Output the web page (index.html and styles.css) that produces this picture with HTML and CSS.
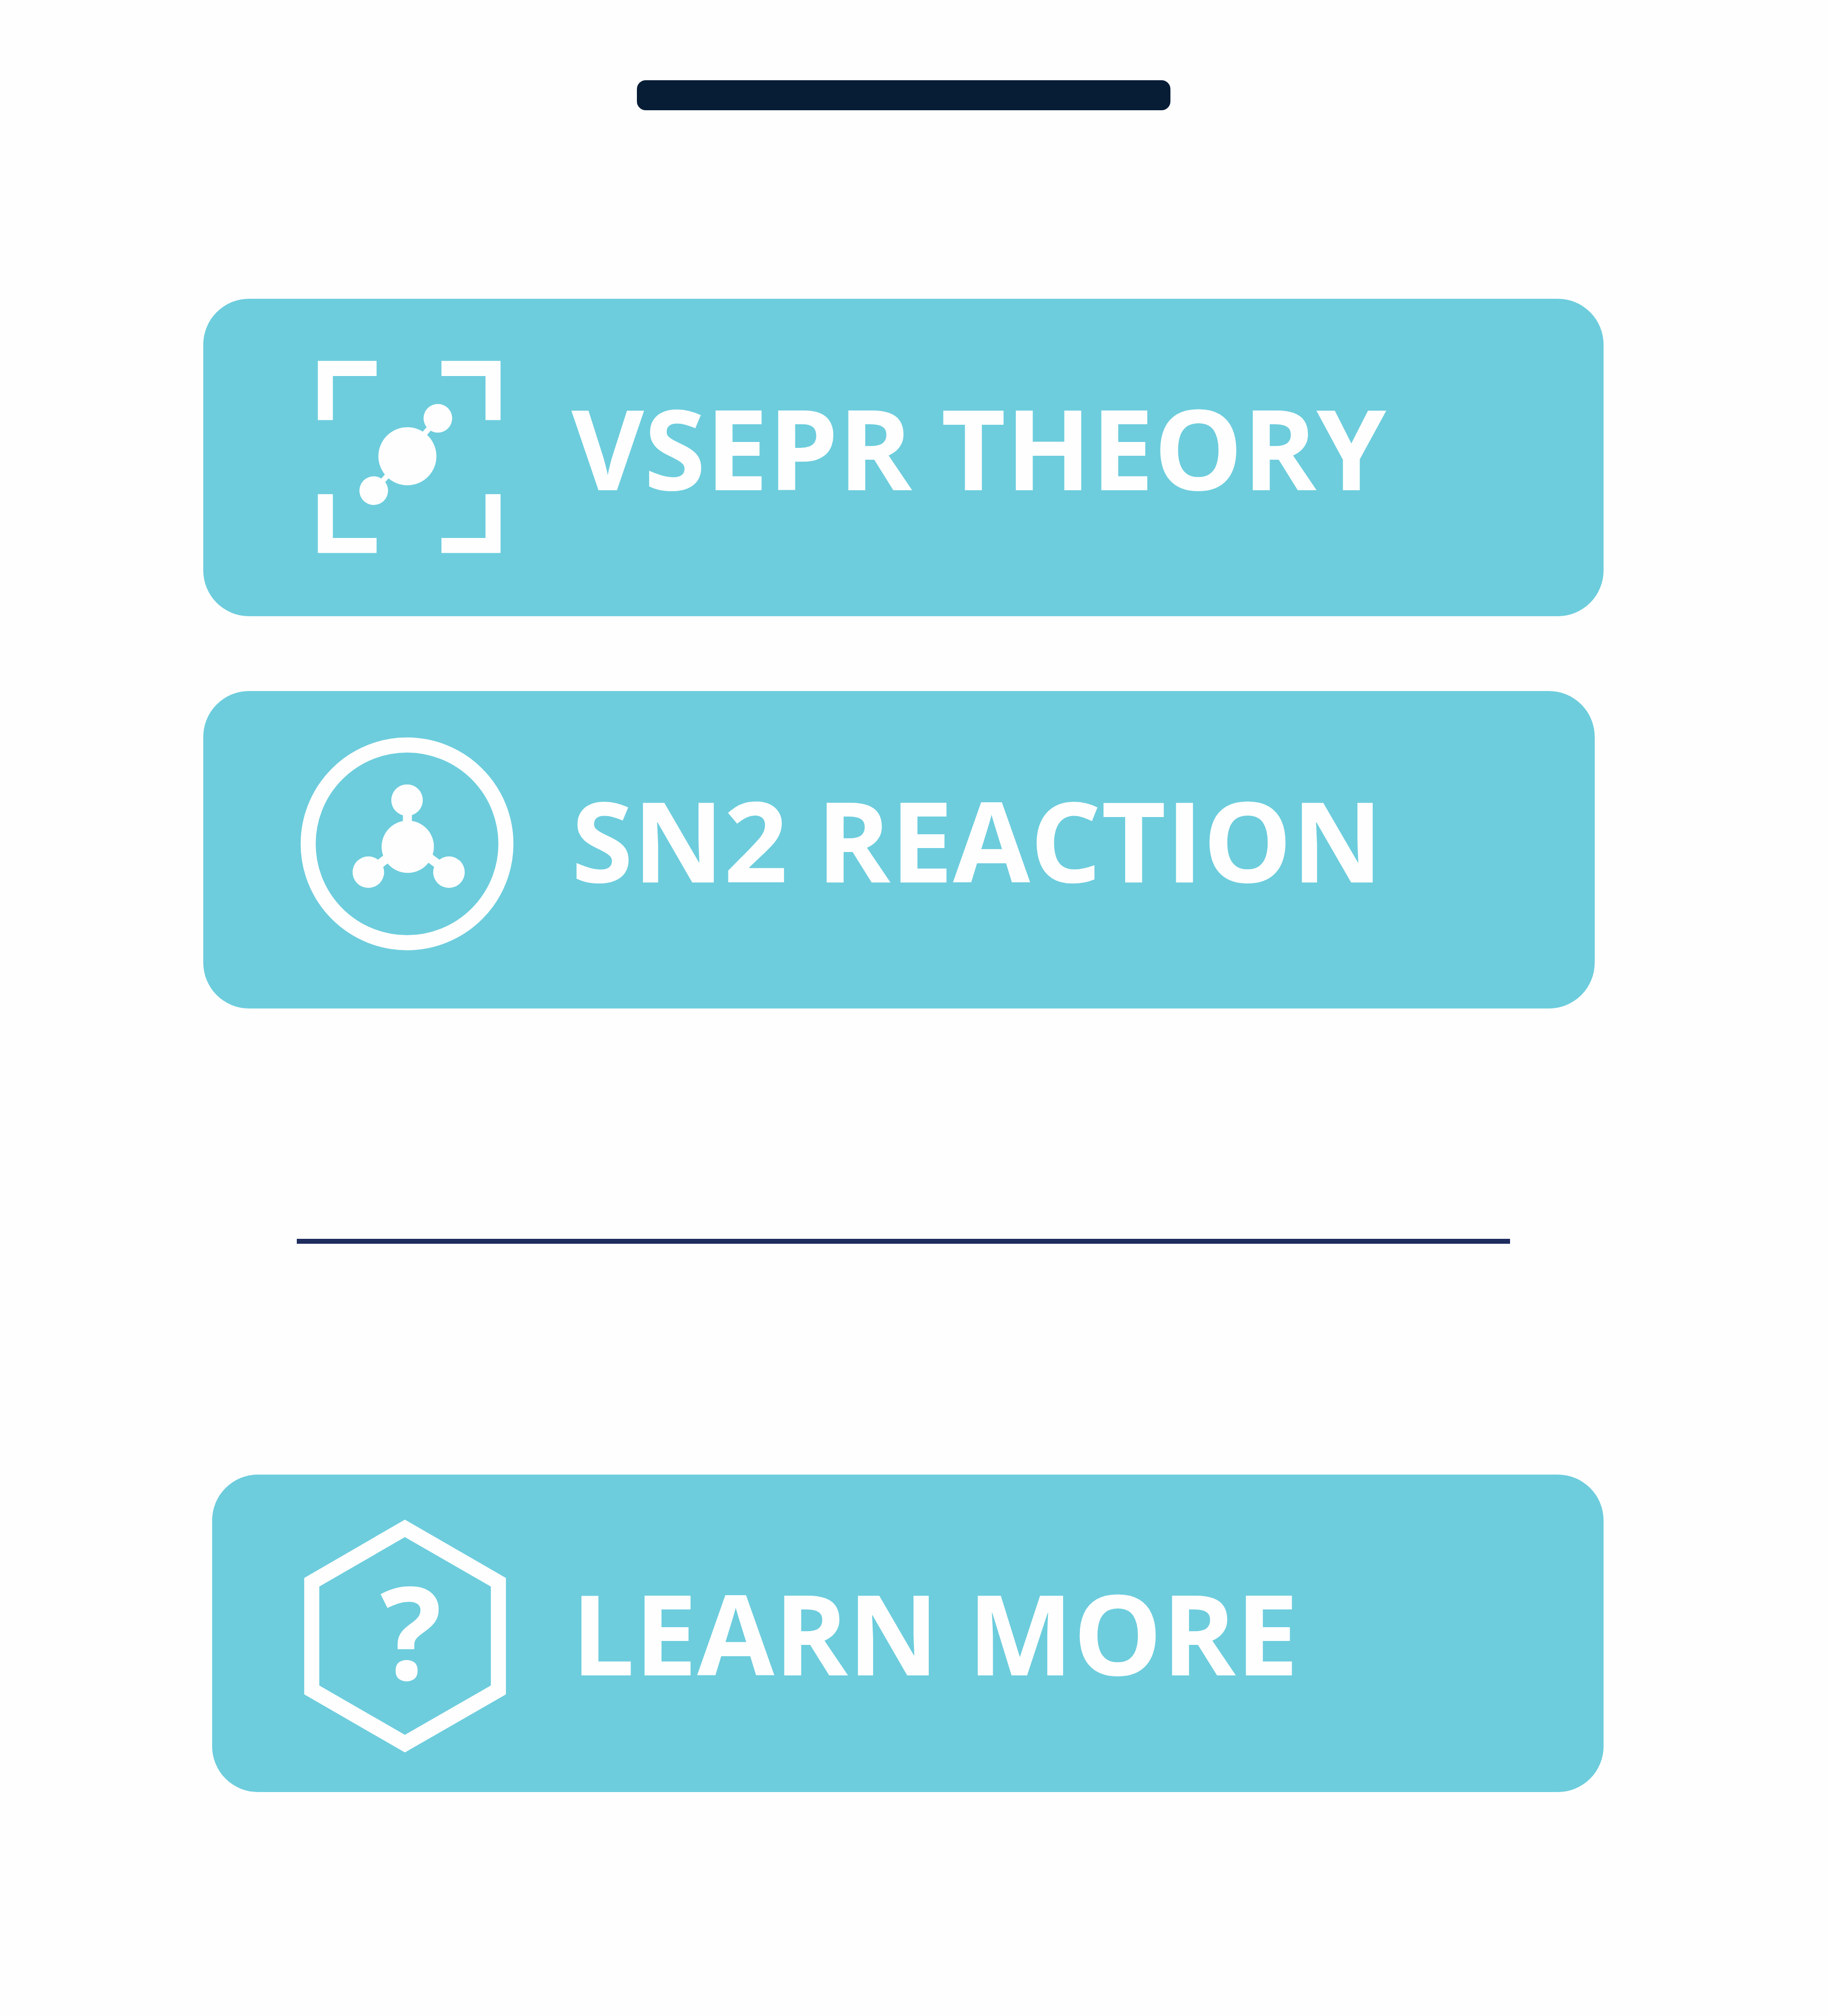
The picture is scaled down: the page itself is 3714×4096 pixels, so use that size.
FILE: index.html
```html
<!DOCTYPE html>
<html lang="en">
<head>
  <meta charset="utf-8">
  <meta name="viewport" content="width=device-width, initial-scale=1">
  <title>Chemistry menu</title>
  <link rel="stylesheet" href="styles.css">
</head>
<body>
  <main class="sheet">
    <div class="handle"></div>

    <nav class="menu">
      <a class="card" href="#vsepr">
        <svg class="card-icon" viewBox="830 833 610 885" aria-hidden="true">
          <g class="stroke">
            <path d="M907 1171V1027H1050M1231 1027H1375V1171M1375 1378V1521H1231M1050 1521H907V1378"/>
            <path class="thin" d="M1060 1349L1205 1185"/>
          </g>
          <circle cx="1136" cy="1272" r="81"/>
          <circle cx="1221" cy="1166" r="40"/>
          <circle cx="1042" cy="1368" r="40"/>
        </svg>
        <span class="card-label">VSEPR THEORY</span>
      </a>

      <a class="card card-short" href="#sn2">
        <svg class="card-icon" viewBox="830 1927 610 885" aria-hidden="true">
          <g class="stroke">
            <circle cx="1135" cy="2353" r="276"/>
            <path class="bond" d="M1136 2240V2340M1045 2420L1110 2369M1235 2420L1165 2368"/>
          </g>
          <circle cx="1137" cy="2361" r="73"/>
          <circle cx="1135" cy="2231" r="44"/>
          <circle cx="1027" cy="2432" r="44"/>
          <circle cx="1252" cy="2432" r="44"/>
        </svg>
        <span class="card-label">SN2 REACTION</span>
      </a>
    </nav>

    <hr class="divider">

    <a class="card card-help" href="#learn-more">
      <svg class="card-icon" viewBox="830 4112 610 885" aria-hidden="true">
        <path fill-rule="evenodd" d="M1129 4237L1411 4400V4725L1129 4887L848 4725V4400ZM1129 4286L890 4424V4700L1129 4838L1369 4700V4424Z"/>
        <text class="mark" x="1146" y="4684">?</text>
      </svg>
      <span class="card-label">LEARN MORE</span>
    </a>
  </main>
</body>
</html>
```
FILE: styles.css
```css
* {
  box-sizing: border-box;
}

body {
  margin: 0;
  background: #fefefe;
  font-family: "Open Sans", "Noto Sans", sans-serif;
}

.sheet {
  display: flex;
  flex-direction: column;
  padding: 163px 456px 455px 413px;
}

.handle {
  align-self: center;
  width: 1084px;
  max-width: 100%;
  height: 61px;
  border-radius: 18px;
  background: #071d36;
}

.menu {
  display: flex;
  flex-direction: column;
  gap: 152px;
  margin-top: 383px;
}

.card {
  display: flex;
  align-items: center;
  gap: 112px;
  height: 645px;
  padding-left: 192px;
  border-radius: 93px;
  background: #6dcddd;
  color: #fefefe;
  text-decoration: none;
}

.card-short {
  margin-right: 18px;
}

.card-help {
  margin-left: 18px;
  padding-left: 174px;
}

.card-icon {
  flex: none;
  width: 444px;
  height: 645px;
  fill: currentColor;
}

.stroke {
  fill: none;
  stroke: currentColor;
  stroke-width: 42;
}

.thin {
  stroke-width: 15;
}

.bond {
  stroke-width: 25;
}

.mark {
  font-size: 360px;
  font-weight: 700;
  text-anchor: middle;
}

.card-label {
  padding-bottom: 44px;
  font-size: 227px;
  font-weight: 700;
  line-height: 312px;
  white-space: nowrap;
}

.card-help .card-label {
  padding-bottom: 6px;
}

.divider {
  align-self: stretch;
  height: 10px;
  margin: 468px 190px 469px;
  border: 0;
  background: #1e2c5e;
}
```
